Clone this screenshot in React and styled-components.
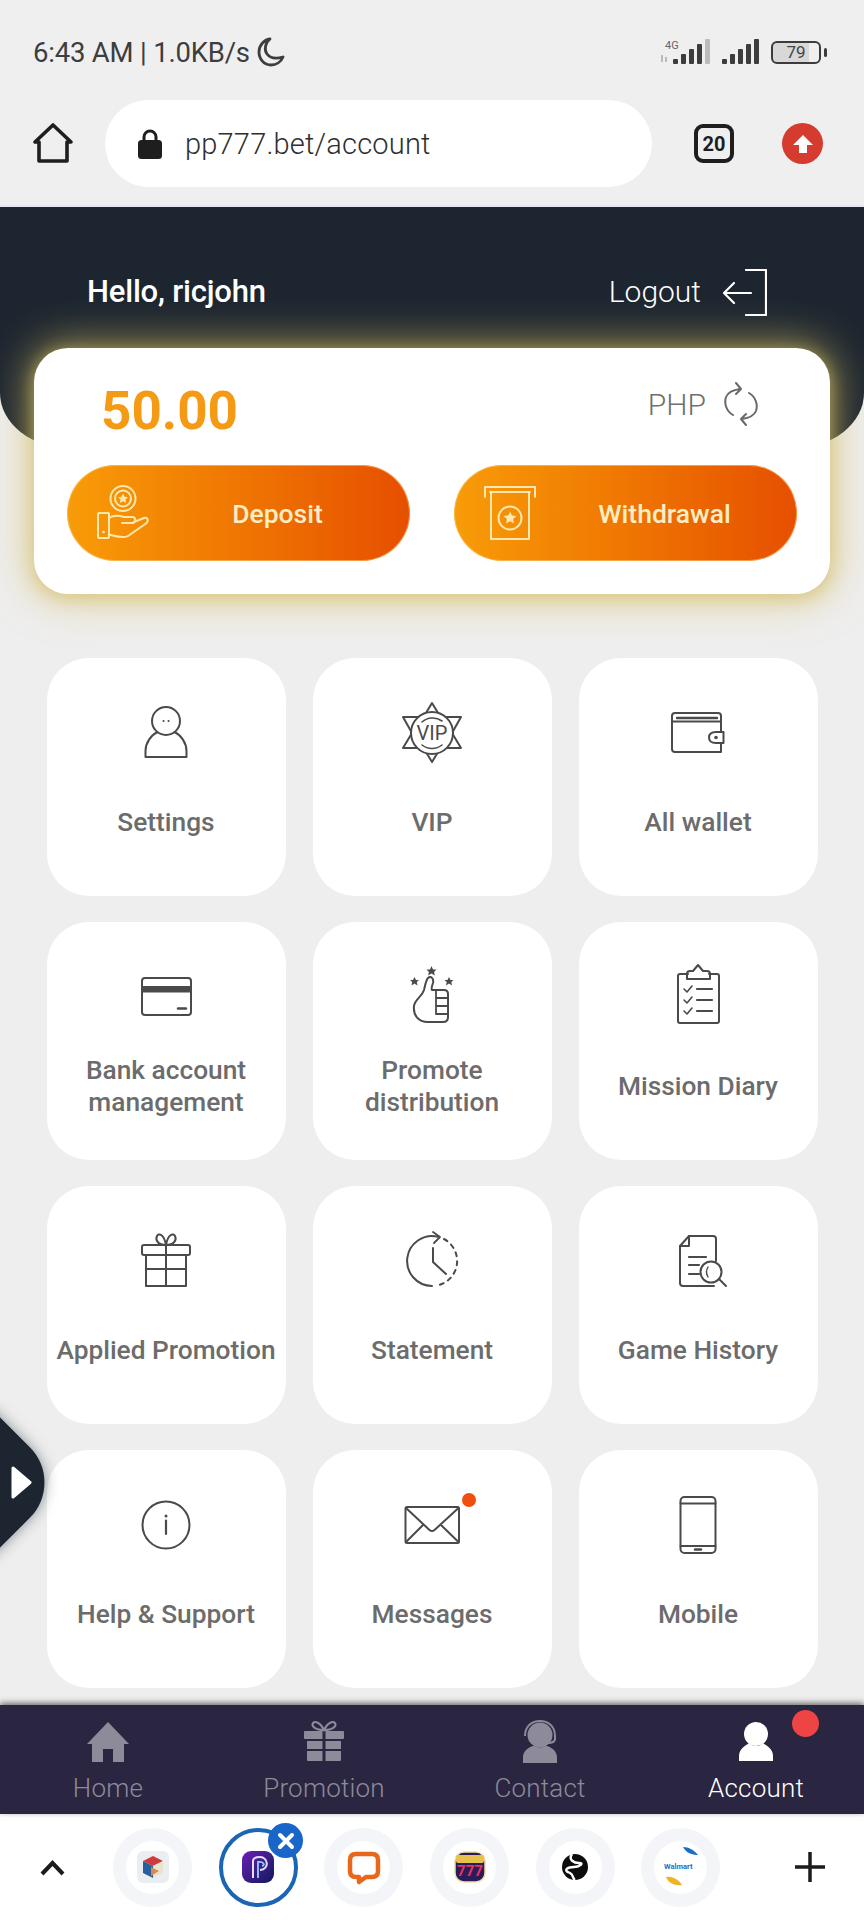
import React from "react";
import styled, { createGlobalStyle } from "styled-components";

const Global = createGlobalStyle`
  html, body { margin: 0; padding: 0; background: #eeeeee; }
  * { box-sizing: border-box; }
`;

const Screen = styled.div`
  position: relative;
  width: 864px;
  height: 1920px;
  overflow: hidden;
  background: #eeeeee;
  font-family: Roboto, "Liberation Sans", sans-serif;
  display: flex;
  flex-direction: column;
`;

/* ---------- system bars ---------- */
const StatusBar = styled.div`
  height: 100px;
  flex: none;
  padding: 4px 38px 0 33px;
  display: flex;
  align-items: center;
  justify-content: space-between;
  background: #efeff0;
  color: #3d3d3d;
`;
const StatusLeft = styled.div`
  display: flex;
  align-items: center;
  gap: 7px;
  font-size: 27.5px;
  letter-spacing: -0.2px;
`;
const StatusRight = styled.div`
  display: flex;
  align-items: center;
  gap: 10px;
`;
const Battery = styled.div`
  position: relative;
  width: 50px;
  height: 23px;
  border: 2.5px solid #3c3c3c;
  border-radius: 6px;
  margin-left: 2px;
  margin-right: 5px;
  font-size: 17px;
  line-height: 18px;
  text-align: center;
  color: #444;
  background: linear-gradient(90deg, #d8d8d8 79%, transparent 79%);
  &::after {
    content: "";
    position: absolute;
    right: -8px;
    top: 5px;
    width: 3px;
    height: 9px;
    border-radius: 2px;
    background: #3c3c3c;
  }
`;
const BrowserBar = styled.div`
  height: 107px;
  flex: none;
  display: flex;
  align-items: flex-start;
  padding: 0 41px 0 33px;
  background: #efeff0;
  border-bottom: 2px solid #e4e9f1;
`;
const HomeSlot = styled.div`
  width: 72px;
  height: 86px;
  display: flex;
  align-items: center;
  flex: none;
`;
const UrlBar = styled.div`
  width: 547px;
  height: 87px;
  flex: none;
  border-radius: 44px;
  background: #fff;
  padding-left: 33px;
  display: flex;
  align-items: center;
  gap: 23px;
  font-size: 29px;
  font-weight: 300;
  color: #2e2e2e;
  letter-spacing: 0.2px;
`;
const TabCount = styled.div`
  width: 40px;
  height: 39px;
  margin: 24px 0 0 42px;
  flex: none;
  border: 4px solid #1e1e1e;
  border-radius: 9px;
  display: flex;
  align-items: center;
  justify-content: center;
  font-size: 20px;
  font-weight: 700;
  color: #1e1e1e;
`;
const UpdateDot = styled.div`
  width: 41px;
  height: 41px;
  margin: 23px 0 0 48px;
  flex: none;
  border-radius: 50%;
  background: #d63b2f;
  display: flex;
  align-items: center;
  justify-content: center;
`;

/* ---------- account header ---------- */
const Header = styled.div`
  height: 241px;
  flex: none;
  background: #1d2630;
  border-radius: 0 0 70px 70px / 0 0 55px 55px;
  padding: 60px 97px 0 87px;
  display: flex;
  align-items: flex-start;
  justify-content: space-between;
  color: #fff;
`;
const Hello = styled.div`
  font-size: 31px;
  font-weight: 500;
  line-height: 50px;
  letter-spacing: -0.2px;
`;
const Logout = styled.div`
  display: flex;
  align-items: center;
  gap: 22px;
  font-size: 30px;
  font-weight: 300;
  line-height: 50px;
`;
const BalanceCard = styled.div`
  flex: none;
  width: 796px;
  height: 246px;
  margin: -100px 0 0 34px;
  position: relative;
  border-radius: 34px;
  background: #fff;
  padding: 33px 33px 0 33px;
  box-shadow: 0 0 38px 8px rgba(214, 190, 100, 0.6), 0 3px 14px 2px rgba(214, 190, 100, 0.5);
`;
const BalanceRow = styled.div`
  display: flex;
  justify-content: space-between;
  align-items: flex-start;
  height: 84px;
  padding: 0 38px 0 34px;
`;
const Amount = styled.div`
  font-size: 53px;
  font-weight: 700;
  line-height: 60px;
  color: #f59a14;
`;
const Currency = styled.div`
  display: flex;
  align-items: center;
  gap: 17px;
  font-size: 30px;
  font-weight: 300;
  color: #6f6f6f;
  height: 46px;
`;
const ActionRow = styled.div`
  display: flex;
  justify-content: space-between;
`;
const ActionButton = styled.div`
  width: 343px;
  height: 96px;
  border-radius: 48px;
  background: linear-gradient(90deg, #f89c08 0%, #f07a02 45%, #e64f00 100%);
  box-shadow: inset 0 0 0 1px rgba(255, 205, 130, 0.55);
  display: flex;
  align-items: center;
  padding: 0 4px 0 30px;
  color: #ffedc4;
  font-size: 26.5px;
  font-weight: 500;
`;
const ActionLabel = styled.span`
  flex: 1;
  text-align: center;
`;

/* ---------- menu grid ---------- */
const MenuGrid = styled.div`
  flex: none;
  margin: 64px 0 0 46.5px;
  display: grid;
  grid-template-columns: repeat(3, 239px);
  grid-auto-rows: 238px;
  column-gap: 27px;
  row-gap: 26px;
`;
const MenuCard = styled.div`
  position: relative;
  border-radius: 42px;
  background: #fff;
  padding-top: 44px;
  display: flex;
  flex-direction: column;
  align-items: center;
`;
const MenuIcon = styled.svg`
  width: 60px;
  height: 60px;
  flex: none;
  overflow: visible;
  fill: none;
  stroke: #4a4a4a;
  stroke-width: 2;
  stroke-linecap: round;
  stroke-linejoin: round;
`;
const MenuLabel = styled.div`
  margin-top: 28px;
  height: 64px;
  width: 100%;
  display: flex;
  align-items: center;
  justify-content: center;
  text-align: center;
  font-size: 26.3px;
  line-height: 32px;
  font-weight: 500;
  color: #6c6c6c;
`;
const Notice = styled.span`
  position: absolute;
  width: 14px;
  height: 14px;
  border-radius: 50%;
  top: 43px;
  left: 149px;
  background: #f04e0f;
`;

/* ---------- floating side tab ---------- */
const SideTab = styled.div`
  position: absolute;
  left: 0;
  top: 1416px;
  width: 46px;
  height: 132px;
  display: flex;
  align-items: center;
  padding-left: 11px;
  &::before {
    content: "";
    position: absolute;
    left: -105px;
    top: -4.5px;
    width: 141px;
    height: 141px;
    border-radius: 50px;
    background: #1d2630;
    transform: rotate(45deg);
    box-shadow: 0 0 14px rgba(30, 45, 60, 0.5);
  }
`;
const SideArrow = styled.svg`
  position: relative;
  width: 21px;
  height: 33px;
`;

/* ---------- bottom nav ---------- */
const BottomNav = styled.div`
  position: relative;
  flex: none;
  height: 109px;
  margin-top: 17px;
  background: #2a2540;
  box-shadow: 0 -2px 6px rgba(0, 0, 0, 0.55);
  display: grid;
  grid-template-columns: repeat(4, 216px);
`;
const NavItem = styled.div`
  position: relative;
  padding-top: 15px;
  display: flex;
  flex-direction: column;
  align-items: center;
  color: ${(p) => (p.$active ? "#ffffff" : "#8d8a9a")};
  font-size: 26px;
  font-weight: 300;
  line-height: 34px;
  letter-spacing: 0.2px;
`;
const NavGlyph = styled.svg`
  width: 44px;
  height: 44px;
  fill: currentColor;
  margin-bottom: 7px;
  flex: none;
`;
const NavBadge = styled.span`
  position: absolute;
  left: 144px;
  top: 5px;
  width: 27px;
  height: 27px;
  border-radius: 50%;
  background: #ef4444;
`;

/* ---------- browser tabs strip ---------- */
const TabStrip = styled.div`
  flex: none;
  height: 106px;
  background: #fff;
  display: grid;
  grid-template-columns: 100px repeat(6, 105.6px) 1fr;
  align-items: center;
`;
const Chevron = styled.svg`
  justify-self: start;
  margin: 2px 0 0 39px;
  width: 27px;
  height: 18px;
`;
const TabBubble = styled.div`
  position: relative;
  justify-self: center;
  width: 79px;
  height: 79px;
  border-radius: 50%;
  background: ${(p) => (p.$active ? "#fff" : "#f4f5f8")};
  border: ${(p) => (p.$active ? "4px solid #1a66b4" : "none")};
  display: flex;
  align-items: center;
  justify-content: center;
  &::before {
    content: "";
    position: absolute;
    inset: 13px;
    border-radius: 50%;
    background: #fff;
  }
`;
const TabLogo = styled.svg`
  position: relative;
  width: 32px;
  height: 32px;
  flex: none;
  overflow: visible;
`;
const CloseBadge = styled.span`
  position: absolute;
  right: -9.5px;
  top: -8.5px;
  width: 35px;
  height: 35px;
  border-radius: 50%;
  background: #1a66c8;
  display: flex;
  align-items: center;
  justify-content: center;
`;
const PlusIcon = styled.svg`
  justify-self: end;
  margin-right: 38px;
  width: 32px;
  height: 32px;
`;

/* ---------- menu icons ---------- */
const IconSettings = () => (
  <MenuIcon viewBox="0 0 60 60">
    <circle cx="30" cy="19" r="14" />
    <path d="M21.500 30C15 33 9.500 41 9.500 49V55H50.500V49C50.500 41 45 33 38.500 30" />
    <path d="M27.500 19h.1M32.500 19h.1" />
  </MenuIcon>
);
const IconVip = () => (
  <MenuIcon viewBox="0 0 60 60">
    <path d="M30 1L38.500 15H59L50 31L59 46H38.500L30 60L21.500 46H1L10 31L1 15H21.500Z" />
    <circle cx="30" cy="31" r="21" fill="#fff" />
    <path d="M20 20A16 16 0 0 1 40 19M20 43A16 16 0 0 0 40 43" strokeWidth="1.600" />
    <text x="30" y="38" textAnchor="middle" fontFamily="Roboto, sans-serif" fontSize="20" fill="#4a4a4a" stroke="none">VIP</text>
  </MenuIcon>
);
const IconWallet = () => (
  <MenuIcon viewBox="0 0 60 60">
    <path d="M7 11H50Q53 11 53 14V50H7Q4 50 4 47V14Q4 11 7 11ZM4 19.500H53" />
    <path d="M9 16H49" strokeWidth="2.400" />
    <path d="M55.500 30H48Q41 30 41 35.500Q41 41 48 41H55.500Z" fill="#fff" />
    <circle cx="48" cy="35.500" r="1.800" fill="#4a4a4a" stroke="none" />
  </MenuIcon>
);
const IconBank = () => (
  <MenuIcon viewBox="0 0 60 60">
    <rect x="6" y="12" width="49" height="37" rx="3" />
    <rect x="6" y="20" width="49" height="6.500" fill="#4a4a4a" stroke="none" />
    <path d="M42 42.500H50" strokeWidth="2.400" />
  </MenuIcon>
);
const IconThumb = () => (
  <MenuIcon viewBox="0 0 60 60">
    <path d="M26 12C29 9 32 13 31 17C30 20 29 22 30 24H42Q46 24 46 28V51Q46 56 41 56H26C16 56 11 49 12 40C13 33 20 31 22 24C23 20 24 14 26 12Z" />
    <path d="M34 24V48M34 32H46M34 40H46M34 48H46" strokeWidth="1.800" />
    <path d="M29.500 0L31 3.500H34.500L32 6L33 9.500L29.500 7.500L26 9.500L27 6L24.500 3.500H28Z" fill="#4a4a4a" stroke="none" />
    <path d="M12.500 11L14 14H17L14.800 16L15.500 19.500L12.500 17.500L9.500 19.500L10.200 16L8 14H11Z" fill="#4a4a4a" stroke="none" />
    <path d="M47 11L48.500 14H51.500L49.300 16L50 19.500L47 17.500L44 19.500L44.700 16L42.500 14H45.500Z" fill="#4a4a4a" stroke="none" />
  </MenuIcon>
);
const IconClipboard = () => (
  <MenuIcon viewBox="0 0 60 60">
    <path d="M20 8H12Q10 8 10 10V55Q10 57 12 57H49Q51 57 51 55V10Q51 8 49 8H41" />
    <path d="M19 13V8Q19 5 22 5H25L30 -1L35 5H39Q42 5 42 8V13Z" />
    <path d="M16 23l3 3 5-6M16 34l3 3 5-6M16 45l3 3 5-6" strokeWidth="1.600" />
    <path d="M29 23H44M29 34H44M29 45H44" strokeWidth="2.200" />
  </MenuIcon>
);
const IconGift = () => (
  <MenuIcon viewBox="0 0 60 60">
    <path d="M30 15C22 15 19 10 21 6C23 3 28 4 30 15C32 4 37 3 39 6C41 10 38 15 30 15Z" />
    <rect x="6" y="15" width="48" height="10" rx="2" />
    <path d="M10 25V56H50V25M30 15V56M10 39H50" />
  </MenuIcon>
);
const IconStatement = () => (
  <MenuIcon viewBox="0 0 60 60">
    <path d="M36 6.700A25 25 0 1 0 30 56" />
    <path d="M31 2L38 7L32 13" strokeWidth="1.800" />
    <path d="M42 9A25 25 0 0 1 36 55.300" strokeDasharray="4 5" />
    <path d="M31 18V32L44 44" />
  </MenuIcon>
);
const IconHistory = () => (
  <MenuIcon viewBox="0 0 60 60">
    <path d="M48 31V9Q48 6 45 6H21L12 16V53Q12 56 15 56H46" />
    <path d="M21 6V16H12" />
    <path d="M21 27H38M21 35H31M21 44H31" strokeWidth="2.200" />
    <circle cx="43" cy="42" r="10.500" fill="#fff" />
    <path d="M40 37Q37 42 40 47" strokeWidth="1.400" />
    <path d="M51 49L58 56" />
  </MenuIcon>
);
const IconInfo = () => (
  <MenuIcon viewBox="0 0 60 60">
    <circle cx="30" cy="31" r="23.500" />
    <path d="M30 26.500V40" strokeWidth="2.200" />
    <circle cx="30" cy="22" r="1.500" fill="#4a4a4a" stroke="none" />
  </MenuIcon>
);
const IconMail = () => (
  <MenuIcon viewBox="0 0 60 60">
    <rect x="3.500" y="13" width="53.500" height="36" rx="1.500" />
    <path d="M4 14L27.500 36Q30 38 32.500 36L56.500 14M4 48L21 31M56.500 48L39 31" />
  </MenuIcon>
);
const IconMobile = () => (
  <MenuIcon viewBox="0 0 60 60">
    <rect x="12.500" y="3" width="35" height="56" rx="4" />
    <path d="M12.500 9.500H47.500M12.500 52H47.500" />
    <path d="M27 55.500H33" strokeWidth="2.400" />
  </MenuIcon>
);

const items = [
  ["Settings", IconSettings],
  ["VIP", IconVip],
  ["All wallet", IconWallet],
  [["Bank account", "management"], IconBank],
  [["Promote", "distribution"], IconThumb],
  ["Mission Diary", IconClipboard],
  ["Applied Promotion", IconGift],
  ["Statement", IconStatement],
  ["Game History", IconHistory],
  ["Help & Support", IconInfo],
  ["Messages", IconMail, true],
  ["Mobile", IconMobile],
];

/* ---------- small drawings ---------- */
const Signal = ({ mobile }) => (
  <svg width={mobile ? 50 : 38} height="26" viewBox={mobile ? "0 0 50 26" : "0 0 38 26"}>
    {mobile && <text x="4" y="10" fontFamily="Roboto, sans-serif" fontSize="11" fill="#666">4G</text>}
    {mobile && <path d="M1 16v7M5 18v5" stroke="#aaa" strokeWidth="1.500" />}
    {[0, 1, 2, 3, 4].map((i) => (
      <rect
        key={i}
        x={(mobile ? 12 : 1) + i * 8}
        y={20 - i * 5}
        width="5"
        height={5 + i * 5}
        rx="1"
        fill={mobile && i === 4 ? "#bbb" : "#3c3c3c"}
      />
    ))}
  </svg>
);

const Moon = () => (
  <svg width="28" height="30" viewBox="0 0 28 30" fill="none" stroke="#3d3d3d" strokeWidth="2.800" strokeLinecap="round" strokeLinejoin="round">
    <path d="M13 2C8 6 7 13 10 17C13 21 19 22 26 20C24 25 19 28 14 28C7 28 2 22 2 15C2 8 7 3 13 2Z" />
  </svg>
);

const HomeOutline = () => (
  <svg width="40" height="40" viewBox="0 0 40 40" fill="none" stroke="#1e1e1e" strokeWidth="3.600" strokeLinejoin="round" strokeLinecap="round">
    <path d="M6 38H34V19H38L20 2L2 19H6Z" />
  </svg>
);

const Lock = () => (
  <svg width="24" height="30" viewBox="0 0 24 30" fill="#1e1e1e">
    <path d="M6 12V8A6 6 0 0 1 18 8V12" fill="none" stroke="#1e1e1e" strokeWidth="3" />
    <rect y="11" width="24" height="19" rx="3.500" />
  </svg>
);

const LogoutGlyph = () => (
  <svg width="44" height="47" viewBox="0 0 44 47" fill="none" stroke="#fff" strokeWidth="2.200" strokeLinecap="round" strokeLinejoin="round">
    <path d="M23 1H43V46H23M28 24H1M11 14L1 24L11 34" />
  </svg>
);

const Refresh = () => (
  <svg width="36" height="44" viewBox="0 0 36 44" fill="none" stroke="#6a6a6a" strokeWidth="2" strokeLinecap="round" strokeLinejoin="round">
    <path d="M10 33C3 29 1 21 3 15C5 10 10 8 17 7M13 1L18 7L13 12" />
    <path d="M26 11C33 15 35 23 33 29C31 34 26 36 19 37M23 32L18 37L23 43" />
  </svg>
);

const CoinHand = () => (
  <svg width="52" height="56" viewBox="0 0 52 56" fill="none" stroke="#ffe7ae" strokeWidth="2" strokeLinejoin="round" strokeLinecap="round">
    <circle cx="26" cy="13.500" r="12.500" />
    <circle cx="26" cy="13.500" r="8" />
    <path d="M26 8.500l1.600 3.300 3.500.4-2.600 2.400.7 3.500-3.200-1.800-3.200 1.800.7-3.500-2.600-2.400 3.500-.4Z" fill="#ffe7ae" stroke="none" />
    <rect x="1" y="28" width="11" height="25" rx="1" />
    <path d="M12 33C18 29 24 31 27 32H36C39 33 39 37 36 38H25" />
    <path d="M37 37L47 33C51 32 52 36 49 38.500L31 51C26 54 18 51 12 49.500" />
    <circle cx="6.500" cy="47" r="1.300" fill="#ffe7ae" stroke="none" />
  </svg>
);

const AtmCard = () => (
  <svg width="52" height="56" viewBox="0 0 52 56" fill="none" stroke="#ffe7ae" strokeWidth="2" strokeLinejoin="round" strokeLinecap="round">
    <path d="M1 12V2H51V12" />
    <path d="M6 7H46M7 7V54H45V7" />
    <circle cx="26" cy="33" r="11.500" />
    <path d="M26 26.500l2 4 4.400.5-3.300 3 .9 4.400-4-2.200-4 2.200.9-4.400-3.300-3 4.400-.5Z" fill="#ffe7ae" stroke="none" />
  </svg>
);

const navIcons = {
  home: <path d="M22 2L43 24H38V42H27V29H17V42H6V24H1Z" />,
  gift: (
    <>
      <path d="M22 10C18 2 13 1 11 3C9 6 13 10 22 10C31 10 35 6 33 3C31 1 26 2 22 10Z" fill="none" stroke="currentColor" strokeWidth="2" />
      <path d="M3 11H20.500V19H3Q2 19 2 18V12Q2 11 3 11ZM23.500 11H41Q42 11 42 12V18Q42 19 41 19H23.500ZM5 21H20.500V29H5ZM23.500 21H39V29H23.500ZM5 31H20.500V41H6Q5 41 5 40ZM23.500 31H39V40Q39 41 38 41H23.500Z" />
    </>
  ),
  contact: (
    <>
      <circle cx="22" cy="15" r="12.500" />
      <path d="M7 16C7 6 14 1 22 1C30 1 37 6 37 16V20" fill="none" stroke="currentColor" strokeWidth="2" />
      <path d="M37 20C35 24 29 23 24 23" fill="none" stroke="currentColor" strokeWidth="2" />
      <path d="M5 43V37C5 31 11 27 16 25.500C19 28 25 28 28 25.500C33 27 39 31 39 37V43Z" />
    </>
  ),
  account: (
    <>
      <circle cx="22" cy="14" r="12" />
      <path d="M5 41V36C5 29 11 26 15 23C18 27 26 27 29 23C33 26 39 29 39 36V41Z" />
    </>
  ),
};

const navItems = [
  ["Home", "home"],
  ["Promotion", "gift"],
  ["Contact", "contact"],
  ["Account", "account", true],
];

const tabLogos = [
  <>
    <rect width="32" height="32" rx="6" fill="#eaeef1" />
    <path d="M16 5L26 10L16 15L6 10Z" fill="#d23a3a" />
    <path d="M6 10L16 15V27L6 22Z" fill="#28609c" />
    <path d="M26 10L16 15V27L26 22Z" fill="#e9e3d0" />
    <path d="M14 16L22 20L14 25Z" fill="#d98a4e" />
  </>,
  <>
    <defs>
      <linearGradient id="ppBg" x1="0" y1="0" x2="1" y2="1">
        <stop offset="0" stopColor="#6a1fb8" />
        <stop offset="1" stopColor="#101a5c" />
      </linearGradient>
    </defs>
    <rect width="32" height="32" rx="9" fill="url(#ppBg)" />
    <path d="M11 27V10C11 7 13 6 18 6C26 6 28 18 18 19" fill="none" stroke="#e9dcff" strokeWidth="2" />
    <path d="M16 27V11C21 10 24 14 20 15" fill="none" stroke="#8fd0ff" strokeWidth="1.800" />
  </>,
  <path d="M8 3H24Q30 3 30 9V20Q30 26 24 26H18L11 31V26H8Q2 26 2 20V9Q2 3 8 3Z" fill="#fff" stroke="#e8671a" strokeWidth="4.500" strokeLinejoin="round" />,
  <>
    <rect x="1" y="1" width="30" height="30" rx="9" fill="#2a1b5c" stroke="#f2e2a0" strokeWidth="1.500" />
    <rect x="2" y="4" width="28" height="8" rx="2" fill="#e6c24c" />
    <text x="16" y="25" textAnchor="middle" fontFamily="Roboto, sans-serif" fontWeight="700" fontSize="15" fill="#e8345c">777</text>
  </>,
  <>
    <circle cx="16" cy="16" r="13" fill="#0d0d0d" />
    <path d="M13 3C9 9 15 12 20 12C26 12 20 16 15 16C9 16 3 19 11 22C15 24 13 27 16 29" fill="none" stroke="#fff" strokeWidth="2.400" />
  </>,
  <>
    <rect x="-2" y="-2" width="36" height="36" rx="8" fill="#fff" />
    <path d="M18 -4C24 -4 29 -1 33 4C27 4 21 2 18 -4Z" fill="#1a6fc4" />
    <path d="M1 26C7 25 13 28 17 34C10 35 3 32 1 26Z" fill="#f0b323" />
    <text x="-1" y="18" fontFamily="Roboto, sans-serif" fontWeight="700" fontSize="7.500" fill="#1a6fc4">Walmart</text>
  </>,
];

export default function App() {
  return (
    <>
      <Global />
      <Screen>
        <StatusBar>
          <StatusLeft>
            <span>6:43 AM | 1.0KB/s</span>
            <Moon />
          </StatusLeft>
          <StatusRight>
            <Signal mobile />
            <Signal />
            <Battery>79</Battery>
          </StatusRight>
        </StatusBar>

        <BrowserBar>
          <HomeSlot>
            <HomeOutline />
          </HomeSlot>
          <UrlBar>
            <Lock />
            <span>pp777.bet/account</span>
          </UrlBar>
          <TabCount>20</TabCount>
          <UpdateDot>
            <svg width="22" height="22" viewBox="0 0 22 22" fill="#fff">
              <path d="M11 2L21 12H15V20H7V12H1Z" />
            </svg>
          </UpdateDot>
        </BrowserBar>

        <Header>
          <Hello>Hello, ricjohn</Hello>
          <Logout>
            Logout
            <LogoutGlyph />
          </Logout>
        </Header>

        <BalanceCard>
          <BalanceRow>
            <Amount>50.00</Amount>
            <Currency>
              PHP
              <Refresh />
            </Currency>
          </BalanceRow>
          <ActionRow>
            <ActionButton>
              <CoinHand />
              <ActionLabel>Deposit</ActionLabel>
            </ActionButton>
            <ActionButton>
              <AtmCard />
              <ActionLabel>Withdrawal</ActionLabel>
            </ActionButton>
          </ActionRow>
        </BalanceCard>

        <MenuGrid>
          {items.map(([label, Icon, notice]) => (
            <MenuCard key={String(label)}>
              <Icon />
              {notice && <Notice />}
              <MenuLabel>
                {Array.isArray(label) ? (
                  <span>
                    {label[0]}
                    <br />
                    {label[1]}
                  </span>
                ) : (
                  label
                )}
              </MenuLabel>
            </MenuCard>
          ))}
        </MenuGrid>

        <SideTab>
          <SideArrow viewBox="0 0 21 33">
            <path d="M2 2L19 16.500L2 31Z" fill="#fff" stroke="#fff" strokeWidth="3" strokeLinejoin="round" />
          </SideArrow>
        </SideTab>

        <BottomNav>
          {navItems.map(([label, icon, active]) => (
            <NavItem key={label} $active={active}>
              <NavGlyph viewBox="0 0 44 44">{navIcons[icon]}</NavGlyph>
              {label}
              {active && <NavBadge />}
            </NavItem>
          ))}
        </BottomNav>

        <TabStrip>
          <Chevron viewBox="0 0 27 18">
            <path d="M3 15L13.500 4L24 15" fill="none" stroke="#1c1c1c" strokeWidth="4" />
          </Chevron>
          {tabLogos.map((logo, i) => (
            <TabBubble key={i} $active={i === 1}>
              <TabLogo viewBox="0 0 32 32">{logo}</TabLogo>
              {i === 1 && (
                <CloseBadge>
                  <svg width="18" height="18" viewBox="0 0 18 18">
                    <path d="M3 3L15 15M15 3L3 15" stroke="#fff" strokeWidth="4" strokeLinecap="round" />
                  </svg>
                </CloseBadge>
              )}
            </TabBubble>
          ))}
          <PlusIcon viewBox="0 0 32 32">
            <path d="M16 1V31M1 16H31" stroke="#1c1c1c" strokeWidth="3.500" />
          </PlusIcon>
        </TabStrip>
      </Screen>
    </>
  );
}
